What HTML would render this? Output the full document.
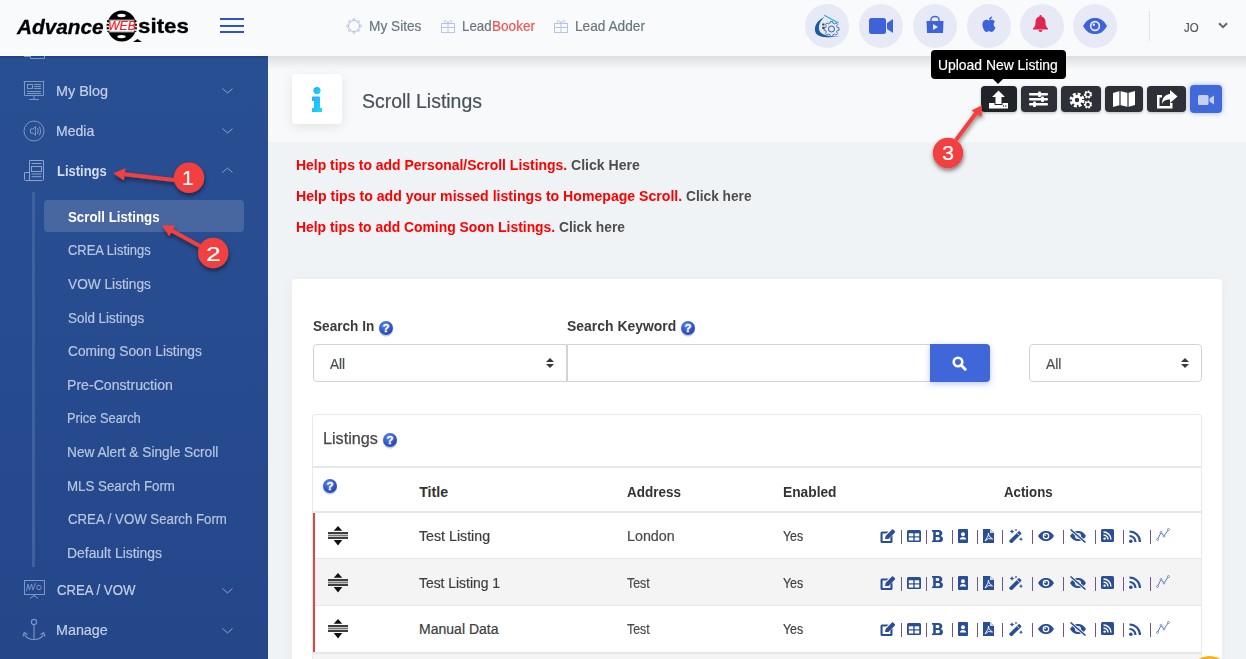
<!DOCTYPE html>
<html><head><meta charset="utf-8">
<style>
*{box-sizing:border-box;margin:0;padding:0}
html,body{width:1246px;height:659px;overflow:hidden;font-family:"Liberation Sans",sans-serif;background:#f0f3f6;position:relative}
.a{position:absolute}
.t{position:absolute;line-height:1;white-space:nowrap;transform-origin:0 0}
svg{position:absolute;overflow:visible}
.circ{position:absolute;top:4px;width:44px;height:44px;border-radius:50%;background:#e7eaf6}
.tb{position:absolute;top:86px;height:26px;background:#2d3036;border-radius:4px;box-shadow:0 1px 3px rgba(0,0,0,.25)}
.q{position:absolute;width:14px;height:14px;border-radius:50%;background:radial-gradient(circle at 40% 30%,#5a86ee,#2a4fc0 60%,#1f3e9e);box-shadow:0 1.5px 1px rgba(0,0,0,.22);color:#fff;font-size:11.5px;font-weight:bold;line-height:14.5px;text-align:center;-webkit-text-stroke:0.3px #fff}
.sel{position:absolute;border:1px solid #cfd4dc;background:#fff}
.hl{position:absolute;height:1px;background:#e4e8ee}
.sep{position:absolute;width:1px;height:14px;background:#6b5a86}
.num{position:absolute;width:31px;height:31px;border-radius:50%;background:#ea3a3f;box-shadow:1px 2px 3px rgba(0,0,0,.45);color:#fff;font-size:22px;line-height:31px;text-align:center}
</style></head><body>
<!-- main backgrounds -->
<div class="a" style="left:268px;top:56px;width:978px;height:86px;background:#f8f9fb"></div>
<div class="a" style="left:268px;top:56px;width:978px;height:14px;background:linear-gradient(#dcdee1,rgba(248,249,251,0))"></div>
<!-- header -->
<div class="a" style="left:0;top:0;width:1246px;height:56px;background:#f9fafc"></div>
<div class="a" style="left:0;top:55px;width:268px;height:1px;background:#fff"></div>
<!-- sidebar -->
<div class="a" style="left:0;top:56px;width:268px;height:603px;background:linear-gradient(#294f93,#24478a)"></div>
<div class="a" style="left:0;top:56px;width:268px;height:3px;background:linear-gradient(#1d3f86,rgba(41,79,147,0))"></div>

<!-- logo -->
<div class="t" style="left:17.4px;top:15.5px;font-size:21px;font-weight:bold;font-style:italic;color:#000;transform:scaleX(0.99);-webkit-text-stroke:0.3px #000">Advance</div>
<svg style="left:104px;top:8px" width="40" height="36" viewBox="0 0 40 36">
  <ellipse cx="17.8" cy="18" rx="14.6" ry="15.6" fill="#000"/>
  <rect x="0" y="12.3" width="40" height="11.5" fill="#f9fafc"/>
  <path d="M4.5 12.3 Q3 18 4.5 23.8 M31 12.3 Q32.5 18 31 23.8" stroke="#000" stroke-width="2.4" fill="none" stroke-dasharray="2 1.5"/>
  <ellipse cx="17.5" cy="7.5" rx="4.2" ry="1.7" fill="#fff"/>
  <ellipse cx="17.5" cy="28.6" rx="4.2" ry="1.7" fill="#fff"/>
  <path d="M5 11.5 H30.5 M5 24.5 H30.5" stroke="#fff" stroke-width="0.6" opacity="0.5"/>
  <path d="M29 34 L33.5 31 L38 34 Z" fill="#000"/>
</svg>
<div class="t" style="left:108px;top:19.8px;font-size:12.5px;font-style:italic;color:#ff1a1a;transform:scaleX(0.98);-webkit-text-stroke:0.2px #ff1a1a">WEB</div>
<div class="t" style="left:138.4px;top:14.7px;font-size:21px;font-weight:bold;color:#000;transform:scaleX(1.064);-webkit-text-stroke:0.3px #000">sites</div>
<!-- hamburger -->
<div class="a" style="left:220px;top:18px;width:24px;height:2px;background:#3252c8"></div>
<div class="a" style="left:220px;top:24.5px;width:24px;height:2px;background:#3252c8"></div>
<div class="a" style="left:220px;top:31px;width:24px;height:2px;background:#3252c8"></div>

<!-- nav icons -->
<svg style="left:346px;top:18px" width="16" height="16" viewBox="0 0 16 16" fill="none" stroke="#b7c3ea" stroke-width="1">
  <circle cx="8" cy="8" r="5.5"/>
  <circle cx="8" cy="1.6" r="1"/><circle cx="8" cy="14.4" r="1"/><circle cx="1.6" cy="8" r="1"/><circle cx="14.4" cy="8" r="1"/>
  <circle cx="3.5" cy="3.5" r="1"/><circle cx="12.5" cy="3.5" r="1"/><circle cx="3.5" cy="12.5" r="1"/><circle cx="12.5" cy="12.5" r="1"/>
</svg>
<svg style="left:441px;top:19px" width="14" height="14" viewBox="0 0 14 14" fill="none" stroke="#b7c3ea" stroke-width="1">
  <rect x="0.5" y="4.5" width="13" height="9"/><path d="M0.5 8.5 H13.5 M7 4.5 V13.5 M7 4.5 C5 0 2 1 4 4.5 M7 4.5 C9 0 12 1 10 4.5"/>
</svg>
<svg style="left:554px;top:19px" width="14" height="14" viewBox="0 0 14 14" fill="none" stroke="#b7c3ea" stroke-width="1">
  <rect x="0.5" y="4.5" width="13" height="9"/><path d="M0.5 8.5 H13.5 M7 4.5 V13.5 M7 4.5 C5 0 2 1 4 4.5 M7 4.5 C9 0 12 1 10 4.5"/>
</svg>

<!-- header circles -->
<div class="circ" style="left:805px"></div>
<div class="circ" style="left:859px"></div>
<div class="circ" style="left:913px"></div>
<div class="circ" style="left:967px"></div>
<div class="circ" style="left:1020px"></div>
<div class="circ" style="left:1073px"></div>
<!-- c1 logo icon -->
<svg style="left:814px;top:14px" width="26" height="24" viewBox="0 0 26 24">
  <path d="M10.5 3 C2.5 6.5 -0.5 13 1.5 18.5 C4 24 15 24 26 22.3 C16 23 7.5 21.5 5.3 16.5 C4 12 6 7 10.5 3 Z" fill="#1a5c9e"/>
  <path d="M10.2 1.2 L24.5 9" stroke="#27aee6" stroke-width="1.3"/>
  <path d="M25.01 13.81 L25.01 16.19 L23.33 16.40 L22.62 18.13 L23.65 19.47 L21.97 21.15 L20.63 20.12 L18.90 20.83 L18.69 22.51 L16.31 22.51 L16.10 20.83 L14.37 20.12 L13.03 21.15 L11.35 19.47 L12.38 18.13 L11.67 16.40 L9.99 16.19 L9.99 13.81 L11.67 13.60 L12.38 11.87 L11.35 10.53 L13.03 8.85 L14.37 9.88 L16.10 9.17 L16.31 7.49 L18.69 7.49 L18.90 9.17 L20.63 9.88 L21.97 8.85 L23.65 10.53 L22.62 11.87 L23.33 13.60 Z" fill="#e7eaf6" stroke="#2f6aa6" stroke-width="0.9"/>
  <circle cx="17.5" cy="15" r="3" fill="none" stroke="#2f5aa6" stroke-width="1"/>
  <rect x="8.2" y="9.5" width="2.2" height="2" fill="#444"/><rect x="8.2" y="12.8" width="2.2" height="2" fill="#444"/>
</svg>
<!-- c2 video -->
<svg style="left:869px;top:18px" width="24" height="16" viewBox="0 0 24 16">
  <rect x="0" y="0" width="17" height="16" rx="2.5" fill="#3e63d8"/><path d="M18 5 L24 1 V15 L18 11 Z" fill="#3e63d8"/>
</svg>
<!-- c3 bag -->
<svg style="left:926px;top:16px" width="18" height="18" viewBox="0 0 18 18">
  <path d="M5 5 V3.5 A4 3 0 0 1 13 3.5 V5" fill="none" stroke="#3e63d8" stroke-width="1.4"/>
  <path d="M0.5 5 H17.5 L17 17 H1 Z" fill="#3e63d8"/><path d="M7 8 L12 11 L7 14 Z" fill="#e7eaf6"/>
</svg>
<!-- c4 apple -->
<svg style="left:981px;top:16px" width="16" height="17" viewBox="0 0 16 17">
  <path d="M8 4.5 C6 3 2 3.5 1.5 7.5 C1 11 3.5 16 5.5 16 C7 16 7 15.3 8 15.3 C9 15.3 9 16 10.5 16 C12.5 16 14 13 14.5 11.5 C12.5 10.5 12 7 14 5.5 C12.5 3.5 10 3.5 8 4.5 Z" fill="#3e63d8"/>
  <path d="M8 4 C8 2 9.5 0.5 11 0.5 C11 2.5 9.5 4 8 4 Z" fill="#3e63d8"/>
</svg>
<!-- c5 bell -->
<svg style="left:1033px;top:15px" width="15" height="17" viewBox="0 0 15 17">
  <path d="M7.5 0 C8.3 0 8.6 0.6 8.6 1.4 C11.5 2 12.5 4.5 12.5 7.5 C12.5 10.5 13.3 12 15 13.5 V14.5 H0 V13.5 C1.7 12 2.5 10.5 2.5 7.5 C2.5 4.5 3.5 2 6.4 1.4 C6.4 0.6 6.7 0 7.5 0 Z" fill="#df2650"/>
  <path d="M5.5 15 H9.5 A2 2 0 0 1 5.5 15 Z" fill="#df2650"/>
</svg>
<!-- c6 eye -->
<svg style="left:1083px;top:18px" width="24" height="16" viewBox="0 0 24 16">
  <path d="M0 8 C4 1 8 0 12 0 C16 0 20 1 24 8 C20 15 16 16 12 16 C8 16 4 15 0 8 Z" fill="#3e63d8"/>
  <circle cx="12" cy="8" r="5.2" fill="#e7eaf6"/><circle cx="12" cy="8" r="3.5" fill="#3e63d8"/><circle cx="10.8" cy="6.8" r="1.2" fill="#e7eaf6"/>
</svg>
<!-- divider + user -->
<div class="a" style="left:1149px;top:11px;width:1px;height:30px;background:#dfe2e7"></div>
<svg style="left:1218px;top:22px" width="10" height="7" viewBox="0 0 10 7"><path d="M1 1.2 L5 5.2 L9 1.2" fill="none" stroke="#666" stroke-width="2"/></svg>

<!-- sidebar icons -->
<svg style="left:23px;top:56px" width="22" height="4" viewBox="0 0 22 4" fill="none" stroke="#7f97c4" stroke-width="1"><path d="M7.5 0 V2.5 H21.5 V0 M1 0.5 H7"/></svg>
<svg style="left:23px;top:81px" width="22" height="20" viewBox="0 0 22 20" fill="none" stroke="#7f97c4" stroke-width="1">
  <path d="M0.5 0.5 H21.5 M1.5 0.5 V14.5 H20.5 V0.5 M11 14.5 V18 M6 18.5 H16"/>
  <rect x="4.5" y="3.5" width="5" height="4"/><path d="M11 3.5 H18 M11 5.5 H18 M11 7.5 H18 M4 10.5 H18 M4 12.5 H18"/>
</svg>
<svg style="left:23px;top:120px" width="22" height="22" viewBox="0 0 22 22" fill="none" stroke="#7f97c4" stroke-width="1">
  <circle cx="11" cy="11" r="10"/><path d="M7.5 9 H10 L12.5 6.5 V15.5 L10 13 H7.5 Z M14.5 8 Q16 11 14.5 14 M16.5 6.5 Q19 11 16.5 15.5"/>
</svg>
<svg style="left:18px;top:155px" width="32" height="30" viewBox="0 0 32 30" fill="none" stroke="#8ea3cc" stroke-width="1">
  <path d="M11.5 25.5 V5.5 H25.5 V24.5 Q25.5 25.5 24.5 25.5 H7.5 Q6.5 25.5 6.5 24.5 V17.5 H11.5"/>
  <path d="M13.5 8.5 H23.5 M13.5 19 H23.5 M13.5 21.7 H23.5"/><rect x="13.5" y="11.5" width="10" height="5"/>
</svg>
<svg style="left:222px;top:88px" width="11" height="6" viewBox="0 0 11 6"><path d="M0.5 0.5 L5.5 5 L10.5 0.5" fill="none" stroke="#8ea3cb" stroke-width="1"/></svg>
<svg style="left:222px;top:128px" width="11" height="6" viewBox="0 0 11 6"><path d="M0.5 0.5 L5.5 5 L10.5 0.5" fill="none" stroke="#8ea3cb" stroke-width="1"/></svg>
<svg style="left:222px;top:167px" width="11" height="6" viewBox="0 0 11 6"><path d="M0.5 5.5 L5.5 1 L10.5 5.5" fill="none" stroke="#8ea3cb" stroke-width="1"/></svg>
<svg style="left:222px;top:588px" width="11" height="6" viewBox="0 0 11 6"><path d="M0.5 0.5 L5.5 5 L10.5 0.5" fill="none" stroke="#8ea3cb" stroke-width="1"/></svg>
<svg style="left:222px;top:628px" width="11" height="6" viewBox="0 0 11 6"><path d="M0.5 0.5 L5.5 5 L10.5 0.5" fill="none" stroke="#8ea3cb" stroke-width="1"/></svg>
<div class="a" style="left:32px;top:192px;width:3px;height:375px;background:#3f619f"></div>
<div class="a" style="left:44px;top:200px;width:200px;height:32px;border-radius:4px;background:rgba(255,255,255,0.15)"></div>
<svg style="left:18px;top:572px" width="32" height="73" viewBox="0 0 32 73" fill="none" stroke="#7f97c4" stroke-width="1">
  <rect x="6.5" y="8.5" width="20" height="14"/><path d="M16 23 V24.5 M12 26.5 L16 23.5 L20 26.5"/>
  <path d="M8.5 19 L10 12 L11.5 18 L13.5 12 L15 18 L17.5 11" stroke-width="0.9"/><circle cx="21" cy="15.5" r="2.2" stroke-width="0.9"/>
  <circle cx="16" cy="50" r="2.6" stroke-width="1.1"/><path d="M16 52.6 V67.5" stroke-width="1.1"/>
  <path d="M6.5 62.5 Q9 67.5 16 67.5 Q23 67.5 25.5 62.5" stroke-width="1.1"/>
  <path d="M5 64.5 L6.3 60.5 L9.5 62.5 M27 64.5 L25.7 60.5 L22.5 62.5" stroke-width="1.1"/>
</svg>

<!-- info box -->
<div class="a" style="left:292px;top:74px;width:50px;height:50px;border-radius:4px;background:#fff;box-shadow:0 3px 12px rgba(0,0,0,.09)"></div>
<svg style="left:309px;top:86.8px" width="16" height="26" viewBox="0 0 16 26">
  <defs><linearGradient id="ig" x1="0" y1="0" x2="1" y2="1"><stop offset="0" stop-color="#2aa8ff"/><stop offset="1" stop-color="#15e0f5"/></linearGradient></defs>
  <circle cx="8" cy="3.6" r="3.6" fill="url(#ig)"/>
  <path d="M3 10 Q3 9.6 3.5 9.6 H10.5 Q11 9.6 11 10 V21 H13 V25 H3 V21 H5 V14 H3 Z" fill="url(#ig)"/>
</svg>

<!-- toolbar -->
<div class="tb" style="left:981px;width:36px;background:#202327"></div>
<div class="tb" style="left:1021px;width:36px"></div>
<div class="tb" style="left:1061px;width:40px"></div>
<div class="tb" style="left:1105px;width:38px"></div>
<div class="tb" style="left:1147px;width:39px"></div>
<div class="tb" style="left:1190px;top:85px;height:28px;width:32px;background:#4169d9;box-shadow:0 0 5px rgba(65,105,217,.5)"></div>
<svg style="left:989px;top:90px" width="19" height="19" viewBox="0 0 19 19">
  <path d="M9.5 0.5 L16 7 H12.5 V14 H6.5 V7 H3 Z" fill="#fff"/>
  <path d="M0 13 H5.5 V15 H13.5 V13 H19 V18.5 H0 Z" fill="#fff"/><circle cx="14.5" cy="16" r="0.8" fill="#333"/><circle cx="16.8" cy="16" r="0.8" fill="#333"/>
</svg>
<svg style="left:1029px;top:91px" width="19" height="16" viewBox="0 0 19 16" fill="#fff">
  <rect x="0" y="2" width="19" height="2.6" rx="1"/><rect x="0" y="7" width="19" height="2.6" rx="1"/><rect x="0" y="12" width="19" height="2.6" rx="1"/>
  <rect x="9" y="0.5" width="3" height="5.5" rx="1"/><rect x="12" y="5.5" width="3" height="5.5" rx="1"/><rect x="4" y="10.5" width="3" height="5.5" rx="1"/>
</svg>
<svg style="left:1069px;top:90px" width="24" height="19" viewBox="0 0 24 19">
  <circle cx="8" cy="10" r="5.5" fill="none" stroke="#fff" stroke-width="4" stroke-dasharray="2.6 1.7"/>
  <circle cx="8" cy="10" r="5" fill="#fff"/><circle cx="8" cy="10" r="2.2" fill="#2d3036"/>
  <circle cx="19" cy="4.5" r="3" fill="none" stroke="#fff" stroke-width="2.2" stroke-dasharray="1.6 1.1"/><circle cx="19" cy="4.5" r="2.5" fill="none" stroke="#fff" stroke-width="1.2"/>
  <circle cx="19" cy="14.5" r="3" fill="none" stroke="#fff" stroke-width="2.2" stroke-dasharray="1.6 1.1"/><circle cx="19" cy="14.5" r="2.5" fill="none" stroke="#fff" stroke-width="1.2"/>
</svg>
<svg style="left:1113px;top:91px" width="22" height="16" viewBox="0 0 22 16">
  <path d="M0 2 L7 0 L15 2 L22 0 V14 L15 16 L7 14 L0 16 Z" fill="#fff"/>
  <path d="M7 0 V14 M15 2 V16" stroke="#2d3036" stroke-width="1.2"/>
</svg>
<svg style="left:1156px;top:90px" width="22" height="19" viewBox="0 0 22 19">
  <path d="M1 5 H6 V7.5 H3.5 V16 H14 V13 H16.5 V18.5 H1 Z" fill="#fff"/>
  <path d="M14 0 L21.5 6.5 L14 13 V9.5 C10 9.5 7.5 10.5 6 14 C6 8 9 4.5 14 4 Z" fill="#fff"/>
</svg>
<svg style="left:1198px;top:95px" width="16" height="10" viewBox="0 0 16 10">
  <rect x="0" y="0" width="10.5" height="10" rx="1.5" fill="#c8d0f2"/><path d="M11.5 3.5 L16 0.5 V9.5 L11.5 6.5 Z" fill="#c8d0f2"/>
</svg>
<!-- tooltip -->
<div class="a" style="left:931px;top:50px;width:135px;height:29px;border-radius:4px;background:#000"></div>
<svg style="left:992px;top:78px" width="12" height="7" viewBox="0 0 12 7"><path d="M0 0 H12 L6 6 Z" fill="#000"/></svg>

<!-- card -->
<div class="a" style="left:292px;top:279px;width:930px;height:400px;border-radius:4px;background:#fff;box-shadow:0 0 14px rgba(0,0,0,.035)"></div>
<div class="q" style="left:379px;top:321px">?</div>
<div class="q" style="left:681px;top:321px">?</div>
<div class="sel" style="left:313px;top:344px;width:254px;height:38px;border-radius:4px 0 0 4px"></div>
<svg style="left:546px;top:358px" width="8" height="10" viewBox="0 0 8 10"><path d="M4 0 L8 4 H0 Z M0 6 H8 L4 10 Z" fill="#343a40"/></svg>
<div class="sel" style="left:567px;top:344px;width:364px;height:38px;border-left:1px solid #cfd4dc"></div>
<div class="a" style="left:930px;top:344px;width:60px;height:38px;border-radius:0 4px 4px 0;background:#3f67d9;box-shadow:0 2px 6px rgba(63,103,217,.35)"></div>
<svg style="left:952px;top:356px" width="15" height="15" viewBox="0 0 15 15"><circle cx="6" cy="6" r="4.3" fill="none" stroke="#fff" stroke-width="2.6"/><path d="M9 9 L13.2 13.2" stroke="#fff" stroke-width="3" stroke-linecap="round"/></svg>
<div class="sel" style="left:1029px;top:344px;width:173px;height:38px;border-radius:4px"></div>
<svg style="left:1181px;top:358px" width="8" height="10" viewBox="0 0 8 10"><path d="M4 0 L8 4 H0 Z M0 6 H8 L4 10 Z" fill="#343a40"/></svg>

<!-- listings panel -->
<div class="a" style="left:312px;top:414px;width:890px;height:260px;border:1px solid #e6e9ee;border-radius:3px;background:#fff"></div>
<div class="q" style="left:383px;top:433px">?</div>
<div class="a" style="left:313px;top:466px;width:888px;height:2px;background:#e4e8ee"></div>
<div class="q" style="left:323px;top:479px">?</div>
<div class="a" style="left:313px;top:511px;width:888px;height:2px;background:#e4e8ee"></div>
<div class="a" style="left:313px;top:559px;width:888px;height:46px;background:#f4f4f4"></div>
<div class="hl" style="left:313px;top:558px;width:888px"></div>
<div class="hl" style="left:313px;top:605px;width:888px"></div>
<div class="a" style="left:313px;top:653px;width:888px;height:10px;background:#f4f4f4"></div>
<div class="hl" style="left:313px;top:652px;width:888px;height:2px"></div>
<div class="a" style="left:313px;top:513px;width:2px;height:139px;background:#e2453f"></div>
<!--SORT-->
<svg width="0" height="0" style="position:absolute;left:0;top:0">
<symbol id="i-edit" viewBox="0 0 16 14"><path d="M0.5 4 Q0.5 2.5 2 2.5 H8.5 L6.5 4.6 H2.6 V11.9 H10.4 V8.4 L12.5 6.3 V12.5 Q12.5 14 11 14 H2 Q0.5 14 0.5 12.5 Z" fill="#2a4e96"/><path d="M5 10 L5.6 7 L12 0.6 Q12.6 0 13.2 0.6 L14.9 2.3 Q15.5 2.9 14.9 3.5 L8.5 9.9 Z" fill="#2a4e96"/></symbol>
<symbol id="i-table" viewBox="0 0 14 12"><rect x="0" y="0" width="14" height="12" rx="1.5" fill="#2a4e96"/><rect x="1.8" y="3.3" width="4.5" height="3" fill="#fff"/><rect x="7.7" y="3.3" width="4.5" height="3" fill="#fff"/><rect x="1.8" y="7.5" width="4.5" height="3" fill="#fff"/><rect x="7.7" y="7.5" width="4.5" height="3" fill="#fff"/></symbol>
<symbol id="i-b" viewBox="0 0 11 12.3"><path fill-rule="evenodd" d="M0 0 H6.5 C9 0 10.3 1.3 10.3 3.2 C10.3 4.5 9.6 5.3 8.6 5.9 C10.1 6.4 11 7.4 11 8.9 C11 11.2 9.5 12.3 7 12.3 H0 V10.6 H1.2 V1.7 H0 Z M3.8 2.1 H5.9 C6.9 2.1 7.4 2.7 7.4 3.6 C7.4 4.5 6.9 5.1 5.9 5.1 H3.8 Z M3.8 7.1 H6.2 C7.3 7.1 7.9 7.7 7.9 8.6 C7.9 9.5 7.3 10.2 6.2 10.2 H3.8 Z" fill="#2a4e96"/></symbol>
<symbol id="i-contact" viewBox="0 0 10 14"><rect x="0" y="0" width="10" height="14" rx="1" fill="#2a4e96"/><circle cx="5" cy="5.3" r="2" fill="#fff"/><path d="M1.8 10.5 Q2 8 5 8 Q8 8 8.2 10.5 Z" fill="#fff"/></symbol>
<symbol id="i-pdf" viewBox="0 0 11 14"><path d="M0 0 H7 L11 4 V14 H0 Z" fill="#2a4e96"/><path d="M7 0 V4 H11" fill="#cfd8ea"/><path d="M2 12 L5 7 L5.5 4 L6 7 L9.5 10 L5.5 9.5 Z" fill="none" stroke="#fff" stroke-width="0.9"/></symbol>
<symbol id="i-magic" viewBox="0 0 14 14"><path d="M0.3 11.6 L9.6 2.3 Q10.1 1.8 10.6 2.3 L12.2 3.9 Q12.7 4.4 12.2 4.9 L2.9 14.2 Q2.4 14.7 1.9 14.2 L0.3 12.6 Q-0.2 12.1 0.3 11.6 Z" fill="#2a4e96"/><path d="M8.3 4.2 L10.3 6.2" stroke="#fff" stroke-width="0.9"/><path d="M3 0 L3.7 1.8 L5.5 2.5 L3.7 3.2 L3 5 L2.3 3.2 L0.5 2.5 L2.3 1.8 Z M12 8 L12.6 9.6 L14.2 10.2 L12.6 10.8 L12 12.4 L11.4 10.8 L9.8 10.2 L11.4 9.6 Z M7 -0.5 L7.4 0.6 L8.5 1 L7.4 1.4 L7 2.5 L6.6 1.4 L5.5 1 L6.6 0.6 Z" fill="#2a4e96"/></symbol>
<symbol id="i-eye" viewBox="0 0 16 10"><path d="M0 5 C2.5 1 5 0 8 0 C11 0 13.5 1 16 5 C13.5 9 11 10 8 10 C5 10 2.5 9 0 5 Z" fill="#2a4e96"/><circle cx="8" cy="5" r="3.3" fill="#fff"/><circle cx="8" cy="5" r="2.1" fill="#2a4e96"/><circle cx="7.2" cy="4.2" r="0.8" fill="#fff"/></symbol>
<symbol id="i-eyes" viewBox="0 0 18 14"><path d="M1 7 C3.5 3 6 2 9 2 C12 2 14.5 3 17 7 C14.5 11 12 12 9 12 C6 12 3.5 11 1 7 Z" fill="#2a4e96"/><circle cx="9" cy="7" r="3" fill="#fff"/><circle cx="9" cy="7" r="1.8" fill="#2a4e96"/><path d="M1.5 0.5 L16.5 13.5" stroke="#fff" stroke-width="3"/><path d="M1.5 0.5 L16.5 13.5" stroke="#2a4e96" stroke-width="1.6"/></symbol>
<symbol id="i-rsss" viewBox="0 0 13 13"><rect x="0" y="0" width="13" height="13" rx="1.5" fill="#2a4e96"/><circle cx="3.6" cy="9.6" r="1.2" fill="#fff"/><path d="M2.5 6 A4.5 4.5 0 0 1 7 10.5 M2.5 3 A7.5 7.5 0 0 1 10 10.5" fill="none" stroke="#fff" stroke-width="1.4"/></symbol>
<symbol id="i-rss" viewBox="0 0 12 13"><circle cx="1.8" cy="11.2" r="1.8" fill="#2a4e96"/><path d="M0.5 6 A6 6 0 0 1 6.5 12 M0.5 1.5 A10.5 10.5 0 0 1 11 12" fill="none" stroke="#2a4e96" stroke-width="2.2"/></symbol>
<symbol id="i-chart" viewBox="0 0 14 13"><path d="M1.5 11.5 L5 4.5 L8 8 L12.5 1.5" fill="none" stroke="#4a6db0" stroke-width="0.9"/><circle cx="1.5" cy="11.5" r="1" fill="#fff" stroke="#4a6db0" stroke-width="0.7"/><circle cx="5" cy="4.5" r="1" fill="#fff" stroke="#4a6db0" stroke-width="0.7"/><circle cx="8" cy="8" r="1" fill="#fff" stroke="#4a6db0" stroke-width="0.7"/><circle cx="12.5" cy="1.5" r="1" fill="#fff" stroke="#4a6db0" stroke-width="0.7"/></symbol>
<symbol id="i-sort" viewBox="0 0 21 20" preserveAspectRatio="none"><path d="M10.5 0 L15 4.8 H6 Z M6 14 H15 L10.5 19.5 Z" fill="#111"/><rect x="0" y="6.2" width="21" height="1.6" fill="#111"/><rect x="0" y="8.6" width="21" height="1.8" fill="#777"/><rect x="0" y="11.2" width="21" height="1.6" fill="#111"/></symbol>
</svg>
<svg style="left:880px;top:529px" width="16" height="14"><use href="#i-edit"/></svg>
<svg style="left:907px;top:530px" width="14" height="12"><use href="#i-table"/></svg>
<svg style="left:932.2px;top:529.9px" width="11" height="12.3"><use href="#i-b"/></svg>
<svg style="left:958px;top:529px" width="10" height="14"><use href="#i-contact"/></svg>
<svg style="left:983.3px;top:529px" width="11" height="14"><use href="#i-pdf"/></svg>
<svg style="left:1009px;top:529px" width="14" height="14"><use href="#i-magic"/></svg>
<svg style="left:1038px;top:531px" width="16" height="10"><use href="#i-eye"/></svg>
<svg style="left:1069px;top:529px" width="18" height="14"><use href="#i-eyes"/></svg>
<svg style="left:1101.2px;top:529px" width="13" height="13"><use href="#i-rsss"/></svg>
<svg style="left:1128.5px;top:529.5px" width="12" height="13"><use href="#i-rss"/></svg>
<svg style="left:1156.4px;top:528.3px" width="14" height="13"><use href="#i-chart"/></svg>
<div class="sep" style="left:900.5px;top:530px"></div>
<div class="sep" style="left:925.5px;top:530px"></div>
<div class="sep" style="left:951.7px;top:530px"></div>
<div class="sep" style="left:976.7px;top:530px"></div>
<div class="sep" style="left:1002.4px;top:530px"></div>
<div class="sep" style="left:1032.0px;top:530px"></div>
<div class="sep" style="left:1062.8px;top:530px"></div>
<div class="sep" style="left:1094.9px;top:530px"></div>
<div class="sep" style="left:1122.9px;top:530px"></div>
<div class="sep" style="left:1150.1px;top:530px"></div>
<svg style="left:328px;top:526px" width="20" height="20"><use href="#i-sort" width="20" height="20"/></svg>
<svg style="left:880px;top:575.5px" width="16" height="14"><use href="#i-edit"/></svg>
<svg style="left:907px;top:576.5px" width="14" height="12"><use href="#i-table"/></svg>
<svg style="left:932.2px;top:576.4px" width="11" height="12.3"><use href="#i-b"/></svg>
<svg style="left:958px;top:575.5px" width="10" height="14"><use href="#i-contact"/></svg>
<svg style="left:983.3px;top:575.5px" width="11" height="14"><use href="#i-pdf"/></svg>
<svg style="left:1009px;top:575.5px" width="14" height="14"><use href="#i-magic"/></svg>
<svg style="left:1038px;top:577.5px" width="16" height="10"><use href="#i-eye"/></svg>
<svg style="left:1069px;top:575.5px" width="18" height="14"><use href="#i-eyes"/></svg>
<svg style="left:1101.2px;top:575.5px" width="13" height="13"><use href="#i-rsss"/></svg>
<svg style="left:1128.5px;top:576.0px" width="12" height="13"><use href="#i-rss"/></svg>
<svg style="left:1156.4px;top:574.8px" width="14" height="13"><use href="#i-chart"/></svg>
<div class="sep" style="left:900.5px;top:576.5px"></div>
<div class="sep" style="left:925.5px;top:576.5px"></div>
<div class="sep" style="left:951.7px;top:576.5px"></div>
<div class="sep" style="left:976.7px;top:576.5px"></div>
<div class="sep" style="left:1002.4px;top:576.5px"></div>
<div class="sep" style="left:1032.0px;top:576.5px"></div>
<div class="sep" style="left:1062.8px;top:576.5px"></div>
<div class="sep" style="left:1094.9px;top:576.5px"></div>
<div class="sep" style="left:1122.9px;top:576.5px"></div>
<div class="sep" style="left:1150.1px;top:576.5px"></div>
<svg style="left:328px;top:572.5px" width="20" height="20"><use href="#i-sort" width="20" height="20"/></svg>
<svg style="left:880px;top:622px" width="16" height="14"><use href="#i-edit"/></svg>
<svg style="left:907px;top:623px" width="14" height="12"><use href="#i-table"/></svg>
<svg style="left:932.2px;top:622.9px" width="11" height="12.3"><use href="#i-b"/></svg>
<svg style="left:958px;top:622px" width="10" height="14"><use href="#i-contact"/></svg>
<svg style="left:983.3px;top:622px" width="11" height="14"><use href="#i-pdf"/></svg>
<svg style="left:1009px;top:622px" width="14" height="14"><use href="#i-magic"/></svg>
<svg style="left:1038px;top:624px" width="16" height="10"><use href="#i-eye"/></svg>
<svg style="left:1069px;top:622px" width="18" height="14"><use href="#i-eyes"/></svg>
<svg style="left:1101.2px;top:622px" width="13" height="13"><use href="#i-rsss"/></svg>
<svg style="left:1128.5px;top:622.5px" width="12" height="13"><use href="#i-rss"/></svg>
<svg style="left:1156.4px;top:621.3px" width="14" height="13"><use href="#i-chart"/></svg>
<div class="sep" style="left:900.5px;top:623px"></div>
<div class="sep" style="left:925.5px;top:623px"></div>
<div class="sep" style="left:951.7px;top:623px"></div>
<div class="sep" style="left:976.7px;top:623px"></div>
<div class="sep" style="left:1002.4px;top:623px"></div>
<div class="sep" style="left:1032.0px;top:623px"></div>
<div class="sep" style="left:1062.8px;top:623px"></div>
<div class="sep" style="left:1094.9px;top:623px"></div>
<div class="sep" style="left:1122.9px;top:623px"></div>
<div class="sep" style="left:1150.1px;top:623px"></div>
<svg style="left:328px;top:619px" width="20" height="20"><use href="#i-sort" width="20" height="20"/></svg>
<div class="a" style="left:1189px;top:655.7px;width:41px;height:41px;border-radius:50%;background:#f5b21c"></div>

<!-- annotations -->
<svg style="left:0;top:0" width="1246" height="659" viewBox="0 0 1246 659">
  <defs><filter id="sh" x="-50%" y="-50%" width="200%" height="200%"><feDropShadow dx="0.5" dy="2.5" stdDeviation="2" flood-color="#000" flood-opacity="0.5"/></filter></defs>
  <g filter="url(#sh)" fill="#f2403f">
    <path d="M176 180.2 L124.5 174.3" stroke="#f2403f" stroke-width="4"/><path d="M113.3 173.2 L125.5 168.2 L123.9 180.4 Z"/>
    <path d="M200 246 L171.5 230.5" stroke="#f2403f" stroke-width="4"/><path d="M162.1 225.3 L175.2 225.6 L169.2 236.3 Z"/>
    <path d="M956 140 L976.5 112.5" stroke="#f2403f" stroke-width="4"/><path d="M982 105.3 L971.4 110.4 L981.6 117 Z"/>
    <circle cx="189" cy="177.8" r="15.2"/>
    <circle cx="213.2" cy="253" r="15.2"/>
    <circle cx="948" cy="153" r="15.2"/>
  </g>
</svg>
<div class="t" style="left:368.71px;top:19.00px;font-size:14.8px;color:#6c757d;font-weight:normal;transform:scaleX(0.9235);-webkit-text-stroke:0.2px #6c757d;">My Sites</div>
<div class="t" style="left:462.29px;top:19.00px;font-size:14.8px;color:#6c757d;font-weight:normal;transform:scaleX(0.8978);-webkit-text-stroke:0.2px #6c757d;">Lead</div>
<div class="t" style="left:491.61px;top:19.00px;font-size:14.8px;color:#f5504f;font-weight:normal;transform:scaleX(0.9183);-webkit-text-stroke:0.2px #f5504f;">Booker</div>
<div class="t" style="left:575.41px;top:19.00px;font-size:14.8px;color:#6c757d;font-weight:normal;transform:scaleX(0.9248);-webkit-text-stroke:0.2px #6c757d;">Lead Adder</div>
<div class="t" style="left:1183.89px;top:21.00px;font-size:13px;color:#555;font-weight:normal;transform:scaleX(0.8827);-webkit-text-stroke:0.2px #555;">JO</div>
<div class="t" style="left:56.45px;top:84.00px;font-size:14.5px;color:#c3cfe6;font-weight:normal;transform:scaleX(0.9940);-webkit-text-stroke:0.2px #c3cfe6;">My Blog</div>
<div class="t" style="left:56.48px;top:124.00px;font-size:14.5px;color:#c3cfe6;font-weight:normal;transform:scaleX(0.9690);-webkit-text-stroke:0.2px #c3cfe6;">Media</div>
<div class="t" style="left:56.82px;top:164.00px;font-size:14.5px;color:#d5ddef;font-weight:bold;transform:scaleX(0.8950);">Listings</div>
<div class="t" style="left:68.03px;top:210.00px;font-size:14.4px;color:#ffffff;font-weight:bold;transform:scaleX(0.9237);">Scroll Listings</div>
<div class="t" style="left:67.65px;top:243.00px;font-size:14px;color:#b8c5e0;font-weight:normal;transform:scaleX(0.9244);-webkit-text-stroke:0.2px #b8c5e0;">CREA Listings</div>
<div class="t" style="left:68.30px;top:277.00px;font-size:14px;color:#b8c5e0;font-weight:normal;transform:scaleX(0.9777);-webkit-text-stroke:0.2px #b8c5e0;">VOW Listings</div>
<div class="t" style="left:67.76px;top:311.00px;font-size:14px;color:#b8c5e0;font-weight:normal;transform:scaleX(0.9592);-webkit-text-stroke:0.2px #b8c5e0;">Sold Listings</div>
<div class="t" style="left:67.61px;top:344.00px;font-size:14px;color:#b8c5e0;font-weight:normal;transform:scaleX(0.9832);-webkit-text-stroke:0.2px #b8c5e0;">Coming Soon Listings</div>
<div class="t" style="left:67.17px;top:378.00px;font-size:14px;color:#b8c5e0;font-weight:normal;transform:scaleX(1.0074);-webkit-text-stroke:0.2px #b8c5e0;">Pre-Construction</div>
<div class="t" style="left:67.27px;top:411.00px;font-size:14px;color:#b8c5e0;font-weight:normal;transform:scaleX(0.9203);-webkit-text-stroke:0.2px #b8c5e0;">Price Search</div>
<div class="t" style="left:67.21px;top:445.00px;font-size:14px;color:#b8c5e0;font-weight:normal;transform:scaleX(0.9771);-webkit-text-stroke:0.2px #b8c5e0;">New Alert &amp; Single Scroll</div>
<div class="t" style="left:67.24px;top:479.00px;font-size:14px;color:#b8c5e0;font-weight:normal;transform:scaleX(0.9500);-webkit-text-stroke:0.2px #b8c5e0;">MLS Search Form</div>
<div class="t" style="left:67.64px;top:512.00px;font-size:14px;color:#b8c5e0;font-weight:normal;transform:scaleX(0.9454);-webkit-text-stroke:0.2px #b8c5e0;">CREA / VOW Search Form</div>
<div class="t" style="left:67.19px;top:546.00px;font-size:14px;color:#b8c5e0;font-weight:normal;transform:scaleX(0.9928);-webkit-text-stroke:0.2px #b8c5e0;">Default Listings</div>
<div class="t" style="left:56.54px;top:583.00px;font-size:14.5px;color:#c3cfe6;font-weight:normal;transform:scaleX(0.9089);-webkit-text-stroke:0.2px #c3cfe6;">CREA / VOW</div>
<div class="t" style="left:56.05px;top:623.00px;font-size:14.5px;color:#c3cfe6;font-weight:normal;transform:scaleX(0.9879);-webkit-text-stroke:0.2px #c3cfe6;">Manage</div>
<div class="t" style="left:361.82px;top:90.00px;font-size:21px;color:#4a5057;font-weight:normal;transform:scaleX(0.9260);-webkit-text-stroke:0.2px #4a5057;">Scroll Listings</div>
<div class="t" style="left:938.43px;top:58.00px;font-size:14.5px;color:#ffffff;font-weight:normal;transform:scaleX(0.9586);-webkit-text-stroke:0.2px #ffffff;">Upload New Listing</div>
<div class="t" style="left:295.76px;top:158.00px;font-size:14.5px;color:#ff0000;font-weight:bold;transform:scaleX(0.9617);">Help tips to add Personal/Scroll Listings.</div>
<div class="t" style="left:570.94px;top:158.00px;font-size:14.5px;color:#4d4d4d;font-weight:bold;transform:scaleX(0.9704);">Click Here</div>
<div class="t" style="left:295.75px;top:189.00px;font-size:14.5px;color:#ff0000;font-weight:bold;transform:scaleX(0.9723);">Help tips to add your missed listings to Homepage Scroll.</div>
<div class="t" style="left:685.85px;top:189.00px;font-size:14.5px;color:#4d4d4d;font-weight:bold;transform:scaleX(0.9451);">Click here</div>
<div class="t" style="left:295.77px;top:220.00px;font-size:14.5px;color:#ff0000;font-weight:bold;transform:scaleX(0.9576);">Help tips to add Coming Soon Listings.</div>
<div class="t" style="left:558.95px;top:220.00px;font-size:14.5px;color:#4d4d4d;font-weight:bold;transform:scaleX(0.9509);">Click here</div>
<div class="t" style="left:313.13px;top:319.00px;font-size:14.4px;color:#3b3b3b;font-weight:bold;transform:scaleX(0.9456);">Search In</div>
<div class="t" style="left:567.12px;top:319.00px;font-size:14.4px;color:#3b3b3b;font-weight:bold;transform:scaleX(0.9688);">Search Keyword</div>
<div class="t" style="left:330.00px;top:357.00px;font-size:14.2px;color:#495057;font-weight:normal;transform:scaleX(0.9599);-webkit-text-stroke:0.2px #495057;">All</div>
<div class="t" style="left:1046.00px;top:357.00px;font-size:14.2px;color:#495057;font-weight:normal;transform:scaleX(0.9800);-webkit-text-stroke:0.2px #495057;">All</div>
<div class="t" style="left:322.70px;top:431.00px;font-size:16.7px;color:#484848;font-weight:normal;transform:scaleX(0.9710);-webkit-text-stroke:0.25px #484848;">Listings</div>
<div class="t" style="left:419.21px;top:485.00px;font-size:14.2px;color:#333;font-weight:bold;">Title</div>
<div class="t" style="left:627.43px;top:485.00px;font-size:14.2px;color:#333;font-weight:bold;transform:scaleX(0.9514);">Address</div>
<div class="t" style="left:782.57px;top:485.00px;font-size:14.2px;color:#333;font-weight:bold;transform:scaleX(0.9698);">Enabled</div>
<div class="t" style="left:1003.53px;top:485.00px;font-size:14.2px;color:#333;font-weight:bold;transform:scaleX(0.9342);">Actions</div>
<div class="t" style="left:419.22px;top:529.00px;font-size:14px;color:#3d3d3d;font-weight:normal;transform:scaleX(1.0150);-webkit-text-stroke:0.2px #3d3d3d;">Test Listing</div>
<div class="t" style="left:626.56px;top:529.00px;font-size:14px;color:#4a4a4a;font-weight:normal;transform:scaleX(1.0221);-webkit-text-stroke:0.2px #4a4a4a;">London</div>
<div class="t" style="left:783.15px;top:529.00px;font-size:14px;color:#3d3d3d;font-weight:normal;transform:scaleX(0.8808);-webkit-text-stroke:0.2px #3d3d3d;">Yes</div>
<div class="t" style="left:419.22px;top:576.00px;font-size:14px;color:#3d3d3d;font-weight:normal;transform:scaleX(0.9915);-webkit-text-stroke:0.2px #3d3d3d;">Test Listing 1</div>
<div class="t" style="left:627.45px;top:576.00px;font-size:14px;color:#4a4a4a;font-weight:normal;transform:scaleX(0.8849);-webkit-text-stroke:0.2px #4a4a4a;">Test</div>
<div class="t" style="left:783.15px;top:576.00px;font-size:14px;color:#3d3d3d;font-weight:normal;transform:scaleX(0.8808);-webkit-text-stroke:0.2px #3d3d3d;">Yes</div>
<div class="t" style="left:419.08px;top:622.00px;font-size:14px;color:#3d3d3d;font-weight:normal;-webkit-text-stroke:0.2px #3d3d3d;">Manual Data</div>
<div class="t" style="left:627.45px;top:622.00px;font-size:14px;color:#4a4a4a;font-weight:normal;transform:scaleX(0.8849);-webkit-text-stroke:0.2px #4a4a4a;">Test</div>
<div class="t" style="left:783.15px;top:622.00px;font-size:14px;color:#3d3d3d;font-weight:normal;transform:scaleX(0.8808);-webkit-text-stroke:0.2px #3d3d3d;">Yes</div>
<div class="t" style="left:182.25px;top:167.00px;font-size:21px;color:#fff;font-weight:normal;transform:scaleX(0.9848);-webkit-text-stroke:0.2px #fff;">1</div>
<div class="t" style="left:205.67px;top:243.00px;font-size:21px;color:#fff;font-weight:normal;transform:scaleX(1.2629);-webkit-text-stroke:0.2px #fff;">2</div>
<div class="t" style="left:941.95px;top:142.00px;font-size:21px;color:#fff;font-weight:normal;transform:scaleX(1.0301);-webkit-text-stroke:0.2px #fff;">3</div>
</body></html>
